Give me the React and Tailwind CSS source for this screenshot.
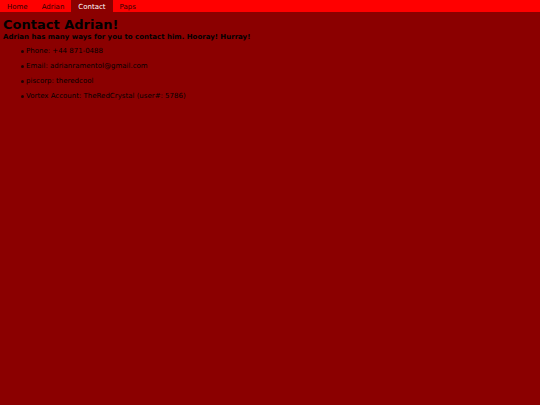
const links = ["Home", "Adrian", "Contact", "Paps"];
const contacts = [
  "Phone: +44 871-0488",
  "Email: adrianramentol@gmail.com",
  "piscorp: theredcool",
  "Vortex Account: TheRedCrystal (user#: 5786)",
];

export default function App() {
  return (
    <div className="min-h-screen bg-[#8b0000] font-['DejaVu_Sans',sans-serif] text-[7px] leading-[9px] text-black">
      <nav className="flex bg-[#ff0000]">
        {links.map((label) => (
          <a
            key={label}
            href="#"
            aria-current={label === "Contact" ? "page" : undefined}
            className={
              label === "Contact"
                ? "bg-[#8b0000] px-[7px] pt-[3px] text-white"
                : "px-[7px] pt-[3px] text-[#300000]"
            }
          >
            {label}
          </a>
        ))}
      </nav>
      <main className="px-[3px] pt-[4px]">
        <h1 className="text-[13px] leading-[17px] font-bold">Contact Adrian!</h1>
        <p className="font-bold">Adrian has many ways for you to contact him. Hooray! Hurray!</p>
        <ul className="mt-[5px] flex flex-col gap-[6px] pl-[18px]">
          {contacts.map((text) => (
            <li key={text} className="flex items-center gap-[2px]">
              <span className="size-[3px] rounded-full bg-[#200000]" />
              {text}
            </li>
          ))}
        </ul>
      </main>
    </div>
  );
}
